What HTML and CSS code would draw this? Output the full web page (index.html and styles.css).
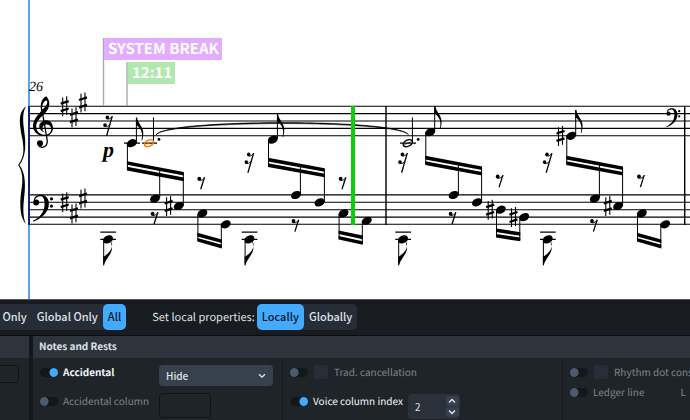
FILE: index.html
```
<!DOCTYPE html>
<html lang="en">
<head>
    <meta charset="UTF-8">
    <meta name="viewport" content="width=device-width, initial-scale=1.0">
    <title>Score editor</title>
    <link rel="stylesheet" href="styles.css">
</head>
<body>
<main class="score">
    <svg class="score-svg" viewBox="0 0 690 299" role="img" aria-label="Score, bars 26 and 27">
        <defs>
            <ellipse id="head" rx="5.2" ry="3.8" transform="rotate(-26)"/>
            <g id="half">
                <ellipse rx="4.9" ry="3.1" transform="rotate(-26)" fill="none" stroke-width="1.4"/>
                <path d="M-3.4 1.4L3.4-1.4" stroke-width=".7"/>
            </g>
            <g id="sharp" stroke="#000">
                <path d="M-2-8.8V10M2-10V8.8" stroke-width="1.1"/>
                <path d="M-4-2.5L4-5.1M-4 4.9L4 2.3" stroke-width="2.3"/>
            </g>
            <g id="rest8">
                <circle r="1.9"/>
                <path d="M-1.4 1C1 2.6 3.6 1.4 5.2-1" fill="none" stroke="#000"/>
                <path d="M5.2-1.4L1.4 10.6" stroke="#000" stroke-width="1.3"/>
            </g>
            <g id="rest16">
                <circle r="1.8"/>
                <circle cx="-2.4" cy="7.6" r="1.8"/>
                <path d="M-1.3 1C1 2.4 3.4 1.2 4.8-1M-3.7 8.6C-1.4 10 1 8.8 2.4 6.8" fill="none" stroke="#000"/>
                <path d="M4.9-1.3L-.8 18.4" stroke="#000" stroke-width="1.3"/>
            </g>
            <path id="flag" d="M-.5 0H.5C1 6 7.8 10 6.6 17.5Q6.3 20.5 5.6 23L4.8 22.8C7 15.5 4 11 .5 8H-.5Z"/>
            <g id="low">
                <path d="M-7.7-7.3H8M-7.7 0H8" stroke="#000" stroke-width="1.2"/>
                <use href="#head"/>
                <path d="M-4.3 1V25" stroke="#000"/>
                <path d="M-4.8 26H-4C-3 20 4.5 14.5 4 8Q3.8 5 2.8 3L3.6 2.8C5.5 8 1.8 13.5-4 17H-4.8Z"/>
            </g>
            <g id="bass">
                <circle cx="3.6" cy="7.6" r="3"/>
                <path d="M1.2 6C1-2.2 16.5-3 16.3 9C16.2 18 8.5 24 .5 27L.3 26.3C7 22.5 12 17.5 12 9.2C12 4 10.5 1.4 7.6 1.4C4.8 1.4 2.6 3.2 2 5.6Z"/>
                <circle cx="18.9" cy="4" r="1.6"/>
                <circle cx="18.9" cy="11.3" r="1.6"/>
            </g>
        </defs>

        <!-- staves -->
        <path class="staff" d="M28 106.2H690M28 113.6H690M28 121H690M28 128.4H690M28 135.8H690"/>
        <path class="staff" d="M28 194.9H690M28 202.3H690M28 209.7H690M28 217.1H690M28 224.3H690"/>
        <path class="bar" d="M386 106V225M684.7 106V225"/>
        <path d="M26 106.4C17 113 20 126 22.4 139C24 150 24.5 156 18.2 165C24.5 174 22 186 21 193C19.5 206 20 217 26 224.6C23.6 219 22.6 211 24 199C25.3 188 26.4 174 19.4 165C26.6 156 25.8 143 24.2 131C22.6 119 22.6 112 26 106.4Z"/>
        <rect class="caret" x="28" y="0" width="2" height="299"/>
        <rect class="system-line" x="28" y="106" width="2" height="119"/>

        <!-- clefs and key signatures -->
        <path fill-rule="evenodd" d="M41.2 111C39.5 103 42.5 98 46.2 96.2C50 100 51 106.5 45.6 112.6C41.5 117.2 36 120.5 36.2 127C36.5 132 41 135.3 46 134.8C49.5 134.2 51.2 132 51.2 129C51.2 126 49 124.2 46.2 124.4C42 125 41 129.6 44.8 132.4C39.8 131 38 126.8 40 123.6C41.6 121 44.2 120 46.6 120.2C50.8 120.6 53 124 53 128C53 132.6 49.6 136.2 44.4 136.1C37.4 136 33 131.4 33 126C33 119.6 38 115 41.2 111ZM42.3 109.8C46 106.6 48.6 102.6 46.6 100.6C43.6 101 41.6 105.5 42.3 109.8Z"/>
        <path d="M41.8 109L47.2 140C48 146.5 42.6 148.8 38.6 146" fill="none" stroke="#000" stroke-width="1.3"/>
        <circle cx="40" cy="143.3" r="3"/>
        <use href="#bass" x="32.6" y="194.8"/>
        <use href="#bass" transform="translate(666 108.4) scale(.7)"/>
        <use href="#sharp" x="64.7" y="106.2"/>
        <use href="#sharp" x="74" y="117.3"/>
        <use href="#sharp" x="83" y="102.5"/>
        <use href="#sharp" x="64.7" y="202.2"/>
        <use href="#sharp" x="74" y="213.4"/>
        <use href="#sharp" x="83" y="198.6"/>

        <!-- upper voice -->
        <path class="ledger" d="M124 143.2H140M142 143.2H157M400 143.2H416"/>
        <path class="stem" d="M136.4 143V118M127.4 143V170M277.4 139V114M268.5 140V166M434.7 132V106M425.8 132V164M575.7 135V110M566.8 136V164M153.5 143V117.3M412.4 143V117.3"/>
        <use href="#head" x="131.8" y="143.2"/>
        <use href="#head" x="272.8" y="139.6"/>
        <use href="#head" x="430.2" y="132.2"/>
        <use href="#head" x="571.2" y="135.8"/>
        <use href="#flag" x="136.6" y="117.5"/>
        <use href="#flag" x="277.6" y="114"/>
        <use href="#flag" x="434.9" y="106"/>
        <use href="#flag" x="575.9" y="110"/>
        <use href="#half" class="half-selected" x="149" y="143.2"/>
        <use href="#half" class="half" x="407.8" y="143.2"/>
        <circle cx="159" cy="139.4" r="1.4"/>
        <circle cx="418.2" cy="139.4" r="1.4"/>
        <use href="#sharp" x="560.5" y="136"/>
        <path d="M156 135C162 118.5 402 118.5 408.5 134.8C398 119.8 166 119.8 156 135Z" stroke="#000" stroke-width=".6"/>

        <!-- cross-staff beams -->
        <path d="M127 161.2L183.8 172V175.6L127 164.8ZM127 166.8L183.8 177.6V181.2L127 170.4Z"/>
        <path d="M268 157.8L324.8 168.2V171.8L268 161.4ZM268 163.3L324.8 173.7V177.3L268 166.9Z"/>
        <path d="M425.3 155.8L482 166.4V170L425.3 159.4ZM425.3 161.3L482 171.9V175.5L425.3 164.9Z"/>
        <path d="M566.3 155.8L623 166.4V170L566.3 159.4ZM566.3 161.3L623 171.9V175.5L566.3 164.9Z"/>
        <path class="stem" d="M159.7 169V198M183.3 173V206M300.4 165V195M324.4 170V202M458.4 163V195M481.6 168V202M599.4 163V198M622.6 168V206"/>
        <use href="#head" x="155" y="198.6"/>
        <use href="#head" x="178.7" y="206"/>
        <use href="#head" x="296" y="195"/>
        <use href="#head" x="319.5" y="202.4"/>
        <use href="#head" x="453.7" y="195"/>
        <use href="#head" x="477" y="202.4"/>
        <use href="#head" x="594.8" y="198.6"/>
        <use href="#head" x="618.1" y="206"/>
        <use href="#sharp" x="168.6" y="206"/>
        <use href="#sharp" x="607.8" y="206"/>

        <!-- lower pairs -->
        <path d="M197.4 232.8L221.8 239.4V243L197.4 236.4ZM197.4 238L221.8 244.8V248.4L197.4 241.6Z"/>
        <path d="M338.6 230.4L362.8 235.6V239.2L338.6 234ZM338.6 236L362.8 241.2V244.8L338.6 239.6Z"/>
        <path d="M496 228.4L520.3 232.2V235.8L496 232ZM496 234L520.3 237.6V241.2L496 237.6Z"/>
        <path d="M637 232.8L661.3 239.4V243L637 236.4ZM637 238L661.3 244.8V248.4L637 241.6Z"/>
        <path class="stem" d="M197.9 214V241M221.3 225V247M339.1 214V239M362.3 221V244M496.5 210V237M519.8 218V240M637.5 214V241M660.8 225V247"/>
        <use href="#head" x="202.4" y="213.4"/>
        <use href="#head" x="225.7" y="224.3"/>
        <use href="#head" x="343.5" y="213.4"/>
        <use href="#head" x="366.8" y="220.8"/>
        <use href="#head" x="500.8" y="209.7"/>
        <use href="#head" x="524.2" y="217.1"/>
        <use href="#head" x="641.8" y="213.4"/>
        <use href="#head" x="665.2" y="224.3"/>
        <use href="#sharp" x="490.2" y="209.7"/>
        <use href="#sharp" x="513.5" y="217.1"/>

        <!-- low eighths -->
        <use href="#low" x="108" y="239.4"/>
        <use href="#low" x="249.4" y="239.4"/>
        <use href="#low" x="403" y="239.4"/>
        <use href="#low" x="547.7" y="239.4"/>

        <!-- rests -->
        <use href="#rest16" x="107.4" y="117.4"/>
        <use href="#rest16" x="248.7" y="154.4"/>
        <use href="#rest16" x="402.4" y="154.4"/>
        <use href="#rest16" x="547" y="154.4"/>
        <use href="#rest8" x="199.3" y="178.7"/>
        <use href="#rest8" x="152.6" y="213.7"/>
        <use href="#rest8" x="293.5" y="221"/>
        <use href="#rest8" x="340.6" y="178.7"/>
        <use href="#rest8" x="450.6" y="213.7"/>
        <use href="#rest8" x="497.7" y="176.5"/>
        <use href="#rest8" x="592" y="221"/>
        <use href="#rest8" x="639" y="176.5"/>

        <rect class="playhead" x="351" y="106" width="4" height="119"/>
        <text class="dynamic" x="103" y="157">p</text>
        <text class="bar-number" x="29" y="91">26</text>

        <!-- signposts -->
        <path class="post" d="M103.5 38V106M127 62V106"/>
        <rect class="post-break" x="104" y="38" width="118" height="22"/>
        <rect class="post-tuplet" x="128" y="62" width="47" height="22"/>
        <text class="post-text" x="108" y="54">SYSTEM BREAK</text>
        <text class="post-text" x="132" y="78">12:11</text>
    </svg>
</main>

<nav class="toolbar">
    <div class="segment segment-scope">
        <button>Local Only</button>
        <button>Global Only</button>
        <button class="active">All</button>
    </div>
    <span class="toolbar-label">Set local properties:</span>
    <div class="segment">
        <button class="active">Locally</button>
        <button>Globally</button>
    </div>
</nav>

<div class="panels">
    <section class="panel panel-previous">
        <h2></h2>
        <input class="box" type="text" aria-label="Value">
    </section>
    <section class="panel panel-notes">
        <h2>Notes and Rests</h2>
        <div class="columns">
            <div class="column">
                <div class="row">
                    <input class="toggle" type="checkbox" id="accidental" checked>
                    <label class="on strong" for="accidental">Accidental</label>
                    <div class="dropdown">
                        <select aria-label="Accidental type"><option>Hide</option></select>
                        <svg viewBox="0 0 8 6" class="chevron"><path d="M1 1.2L4 4.2L7 1.2"/></svg>
                    </div>
                </div>
                <div class="row">
                    <input class="toggle" type="checkbox" id="acc-column">
                    <label for="acc-column">Accidental column</label>
                    <input class="box" type="text" aria-label="Accidental column value">
                </div>
            </div>
            <div class="column">
                <div class="row">
                    <input class="toggle" type="checkbox" id="trad" aria-label="Set trad. cancellation">
                    <input class="tick" type="checkbox" id="trad-value">
                    <label for="trad-value">Trad. cancellation</label>
                </div>
                <div class="row">
                    <input class="toggle" type="checkbox" id="voice" checked>
                    <label class="on" for="voice">Voice column index</label>
                    <div class="spinner">
                        <input type="text" value="2" aria-label="Voice column index value">
                        <div class="steps">
                            <button aria-label="Increase"><svg viewBox="0 0 8 6" class="chevron"><path d="M1 4.5L4 1.5L7 4.5"/></svg></button>
                            <button aria-label="Decrease"><svg viewBox="0 0 8 6" class="chevron"><path d="M1 1.5L4 4.5L7 1.5"/></svg></button>
                        </div>
                    </div>
                </div>
            </div>
            <div class="column column-tight">
                <div class="row">
                    <input class="toggle" type="checkbox" id="dots" aria-label="Set rhythm dot consolidation">
                    <input class="tick" type="checkbox" id="dots-value">
                    <label for="dots-value">Rhythm dot consolidation</label>
                </div>
                <div class="row">
                    <input class="toggle" type="checkbox" id="ledger">
                    <label for="ledger">Ledger line</label>
                    <label class="side" for="ledger-l">L</label>
                    <input class="box" type="text" id="ledger-l">
                </div>
                <div class="row">
                    <input class="toggle" type="checkbox" aria-label="Ledger line side">
                </div>
            </div>
        </div>
    </section>
</div>
</body>
</html>
```
FILE: styles.css
```
* {
    box-sizing: border-box;
}
body {
    margin: 0;
    height: 100vh;
    display: flex;
    flex-direction: column;
    overflow: hidden;
    background-color: #fff;
    color: #dfe2e6;
    font-family: "Noto Sans CJK SC", "Noto Sans", sans-serif;
    font-size: 10px;
    line-height: 16px;
    text-rendering: geometricPrecision;
}
button, input, select {
    margin: 0;
    padding: 0;
    border: none;
    font: inherit;
    color: inherit;
}

/* score */
.score {
    flex: none;
}
.score-svg {
    display: block;
    width: 100%;
}
.staff {
    stroke: #000;
    stroke-width: 1.1;
}
.bar {
    stroke: #000;
    stroke-width: 1.4;
}
.ledger {
    stroke: #000;
    stroke-width: 1.2;
}
.stem {
    stroke: #000;
    stroke-width: 1;
}
.half {
    stroke: #000;
}
.half-selected {
    stroke: #f57c00;
}
.caret {
    fill: #5ba1e8;
}
.system-line {
    fill: #10245f;
}
.playhead {
    fill: #0fcc0f;
}
.bar-number {
    font: italic 14px "Liberation Serif", serif;
}
.dynamic {
    font: italic bold 22px "Liberation Serif", serif;
}
.post {
    stroke: #aaa;
    stroke-width: 1.4;
}
.post-break {
    fill: #e2adff;
}
.post-tuplet {
    fill: #b0e8b0;
}
.post-text {
    fill: #fff;
    font-size: 15px;
    font-weight: bold;
}

/* toolbar */
.toolbar {
    flex: none;
    display: flex;
    align-items: center;
    height: 37px;
    padding-bottom: 1px;
    border-top: 1px solid #50545a;
    border-bottom: 1px solid #0c0e10;
    background-color: #181c20;
    font-size: 11px;
    white-space: nowrap;
}
.segment {
    display: flex;
    border-radius: 5px;
    background-color: #262d36;
}
.segment-scope {
    margin-left: -33px;
}
.segment button {
    height: 26px;
    padding: 0 5px 2px;
    border-radius: 5px;
    background: none;
    font-weight: 500;
}
.segment .active {
    background-color: #42aaff;
    color: #10151b;
}
.toolbar-label {
    margin: 0 2px 0 26px;
}

/* panels */
.panels {
    flex: 1;
    display: flex;
    gap: 4px;
    min-height: 0;
    background-color: #14171a;
}
.panel {
    overflow: hidden;
    background-color: #1f2428;
}
.panel-previous {
    flex: 0 0 29px;
}
.panel-notes {
    flex: 1;
    min-width: 0;
}
.panel h2 {
    height: 22px;
    margin: 0;
    padding: 2px 6px;
    background-color: #2d343c;
    font-size: 10px;
    font-weight: bold;
}
.panel-previous .box {
    width: 29px;
    height: 18px;
    margin: 7px 0 0 -10px;
}
.columns {
    display: grid;
    grid-template-columns: 249px 280px 1fr;
    height: 100%;
}
.column {
    display: flex;
    flex-direction: column;
    gap: 7px;
    min-width: 0;
    padding: 6px 9px 0 7px;
    overflow: hidden;
    white-space: nowrap;
}
.column + .column {
    border-left: 1px solid #171b1e;
}
.column-tight {
    gap: 4px;
}
.row {
    display: flex;
    align-items: flex-start;
    gap: 5px;
    min-height: 22px;
}
.column-tight .row {
    min-height: 16px;
}
.row label {
    color: #7e848b;
}
.row .on {
    color: #f2f4f6;
}
.row .strong {
    font-weight: bold;
}
.toggle {
    flex: none;
    appearance: none;
    width: 18px;
    height: 9px;
    margin-top: 4px;
    border-radius: 5px;
    background: radial-gradient(circle at 4px 50%, #4d5c6d 4px, transparent 5px), #14171a;
}
.toggle:checked {
    background: radial-gradient(circle at 14px 50%, #42aaff 4px, transparent 5px), #14171a;
}
.tick {
    flex: none;
    appearance: none;
    width: 14px;
    height: 14px;
    margin: 1px 1px 0;
    border-radius: 3px;
    background-color: #282e38;
}
.dropdown {
    display: flex;
    align-items: center;
    width: 114px;
    height: 21px;
    margin: 1px 0 0 auto;
    padding-right: 7px;
    border-radius: 4px;
    background-color: #37414e;
}
.dropdown select {
    flex: 1;
    appearance: none;
    height: 21px;
    padding-left: 7px;
    background: none;
    font-weight: 500;
}
.chevron {
    width: 8px;
    height: 6px;
    fill: none;
    stroke: #e6e9ec;
    stroke-width: 1.3;
}
.box {
    width: 52px;
    height: 25px;
    border: 1px solid #111416;
    border-radius: 4px;
    background-color: #1f2428;
}
.column .box {
    margin: 0 62px 0 auto;
}
.column-tight .box {
    flex: none;
    margin: 3px 0 0;
}
.side {
    margin-left: 31px;
}
.spinner {
    display: flex;
    width: 52px;
    height: 25px;
    margin-top: 1px;
    border-radius: 4px;
    background-color: #2a313b;
}
.spinner input {
    flex: 1;
    min-width: 0;
    padding-left: 7px;
    background: none;
}
.steps {
    display: grid;
    gap: 1px;
    padding: 2px 1px;
}
.steps button {
    display: flex;
    align-items: center;
    justify-content: center;
    width: 13px;
    border-radius: 3px;
    background-color: #37414e;
}
```
